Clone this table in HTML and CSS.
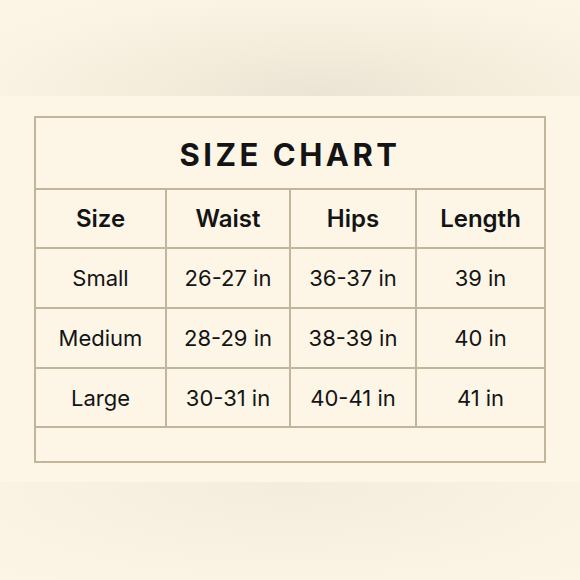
FILE: index.html
```html
<!DOCTYPE html>
<html>
<head>
<meta charset="utf-8">
<link rel="stylesheet" href="styles.css">
</head>
<body>
<div class="page">
  <div class="band-top"></div>
  <div class="mid">
    <div class="chart">
      <div class="title">SIZE CHART</div>
      <div class="cell head">Size</div>
      <div class="cell head">Waist</div>
      <div class="cell head">Hips</div>
      <div class="cell head">Length</div>
      <div class="cell">Small</div>
      <div class="cell">26-27 in</div>
      <div class="cell">36-37 in</div>
      <div class="cell">39 in</div>
      <div class="cell">Medium</div>
      <div class="cell">28-29 in</div>
      <div class="cell">38-39 in</div>
      <div class="cell">40 in</div>
      <div class="cell">Large</div>
      <div class="cell">30-31 in</div>
      <div class="cell">40-41 in</div>
      <div class="cell">41 in</div>
      <div class="empty"></div>
    </div>
  </div>
  <div class="band-bottom"></div>
</div>
</body>
</html>
```
FILE: styles.css
```css
html, body {
  margin: 0;
  padding: 0;
}
body {
  background: #fcf5e6;
  font-family: Inter, "Noto Sans", sans-serif;
  color: #141414;
}
.page {
  width: 580px;
  height: 580px;
  display: flex;
  flex-direction: column;
  overflow: hidden;
}
.band-top {
  height: 96px;
  background: radial-gradient(ellipse 75% 130% at 55% 100%, #ebe4d4 0%, #f5eedd 45%, #fcf5e6 90%);
}
.mid {
  background: #fdf6e7;
  padding: 20px 34px 19px;
}
.chart {
  display: grid;
  grid-template-columns: 129px 122px 124px 127px;
  grid-template-rows: 70px 57px 58px 58px 57px 33px;
  gap: 2px;
  padding: 2px;
  background: #c3b59b;
}
.title, .cell, .empty {
  background: #fdf6e7;
  display: flex;
  align-items: center;
  justify-content: center;
}
.title {
  grid-column: 1 / -1;
  font-size: 31px;
  font-weight: 700;
  letter-spacing: 3.5px;
  padding-top: 2px;
}
.empty {
  grid-column: 1 / -1;
}
.cell {
  font-size: 22px;
  font-weight: 400;
}
.cell.head {
  font-size: 24px;
  font-weight: 600;
}
.band-bottom {
  flex: 1;
  background: radial-gradient(ellipse 80% 140% at 50% 0%, #f4ecdc 0%, #f8f0e1 45%, #fcf5e6 90%);
}
```
